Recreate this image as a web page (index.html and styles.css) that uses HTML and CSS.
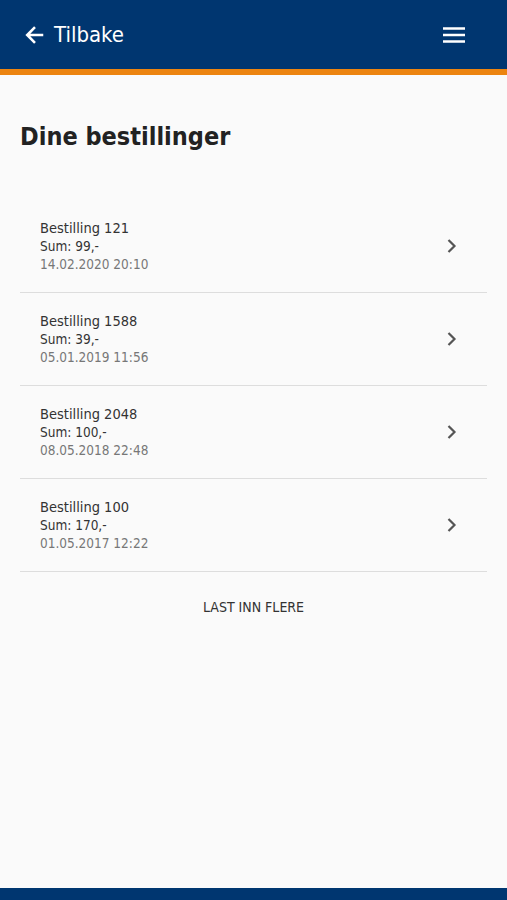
FILE: index.html
```html
<!DOCTYPE html>
<html>

<head>
    <meta charset="utf-8">
    <title>Dine bestillinger</title>
    <link rel="stylesheet" href="styles.css">
</head>

<body>
    <div id="topp">
        <a class="tilbake">
            <svg width="22" height="22" viewBox="0 0 24 24"><path d="M21 12H4M12 3.5l-8.5 8.5 8.5 8.5" fill="none" stroke="#fff" stroke-width="2.8" /></svg>
            <span>Tilbake</span>
        </a>
        <a class="meny">
            <svg width="24" height="20" viewBox="0 0 24 20"><path d="M1 3.5h22M1 10h22M1 16.5h22" stroke="#fff" stroke-width="2.6" /></svg>
        </a>
    </div>

    <div id="innhold">
        <h1 class="tittel">Dine bestillinger</h1>

        <ul class="bestillinger">
            <li>
                <div class="info">
                    <div class="navn">Bestilling 121</div>
                    <div class="sum">Sum: 99,-</div>
                    <div class="dato">14.02.2020 20:10</div>
                </div>
                <svg class="pil" width="12" height="16" viewBox="0 0 12 16"><path d="M3.5 2l6 6-6 6" fill="none" stroke="#555" stroke-width="2.2" /></svg>
            </li>
            <li>
                <div class="info">
                    <div class="navn">Bestilling 1588</div>
                    <div class="sum">Sum: 39,-</div>
                    <div class="dato">05.01.2019 11:56</div>
                </div>
                <svg class="pil" width="12" height="16" viewBox="0 0 12 16"><path d="M3.5 2l6 6-6 6" fill="none" stroke="#555" stroke-width="2.2" /></svg>
            </li>
            <li>
                <div class="info">
                    <div class="navn">Bestilling 2048</div>
                    <div class="sum">Sum: 100,-</div>
                    <div class="dato">08.05.2018 22:48</div>
                </div>
                <svg class="pil" width="12" height="16" viewBox="0 0 12 16"><path d="M3.5 2l6 6-6 6" fill="none" stroke="#555" stroke-width="2.2" /></svg>
            </li>
            <li>
                <div class="info">
                    <div class="navn">Bestilling 100</div>
                    <div class="sum">Sum: 170,-</div>
                    <div class="dato">01.05.2017 12:22</div>
                </div>
                <svg class="pil" width="12" height="16" viewBox="0 0 12 16"><path d="M3.5 2l6 6-6 6" fill="none" stroke="#555" stroke-width="2.2" /></svg>
            </li>
        </ul>

        <div class="flere">LAST INN FLERE</div>
    </div>

    <div id="bunn"></div>
</body>

</html>
```

FILE: styles.css
```css
* {
    font-family: 'DejaVu Sans Condensed', 'DejaVu Sans', sans-serif;
    box-sizing: border-box;
}

html,
body {
    margin: 0;
    padding: 0;
    height: 100%;
}

body {
    background-color: #fafafa;
    display: flex;
    flex-direction: column;
}

#topp {
    height: 75px;
    background-color: #003670;
    border-bottom: 6px solid #ec8410;
    display: flex;
    align-items: center;
    justify-content: space-between;
    padding: 0 41px 0 24px;
    color: #ffffff;
}

.tilbake {
    display: flex;
    align-items: center;
    gap: 8px;
    font-size: 22px;
}

.meny svg {
    display: block;
}

#innhold {
    flex-grow: 1;
    padding: 0 20px;
}

.tittel {
    font-size: 25px;
    font-weight: bold;
    color: #222222;
    margin: 0;
    padding: 47px 0 48px;
    line-height: 30px;
}

.bestillinger {
    list-style: none;
    margin: 0;
    padding: 0;
}

.bestillinger li {
    display: flex;
    align-items: center;
    justify-content: space-between;
    height: 93px;
    padding: 0 30px 0 20px;
    border-bottom: 1px solid #dddddd;
}

.navn {
    font-size: 14.5px;
    color: #333333;
    line-height: 19px;
}

.sum {
    font-size: 13.5px;
    color: #333333;
    line-height: 17px;
}

.dato {
    font-size: 13.5px;
    color: #777777;
    line-height: 19px;
}

.flere {
    text-align: center;
    font-size: 14px;
    color: #333333;
    margin-top: 27px;
}

#bunn {
    height: 12px;
    background-color: #003670;
}
```
